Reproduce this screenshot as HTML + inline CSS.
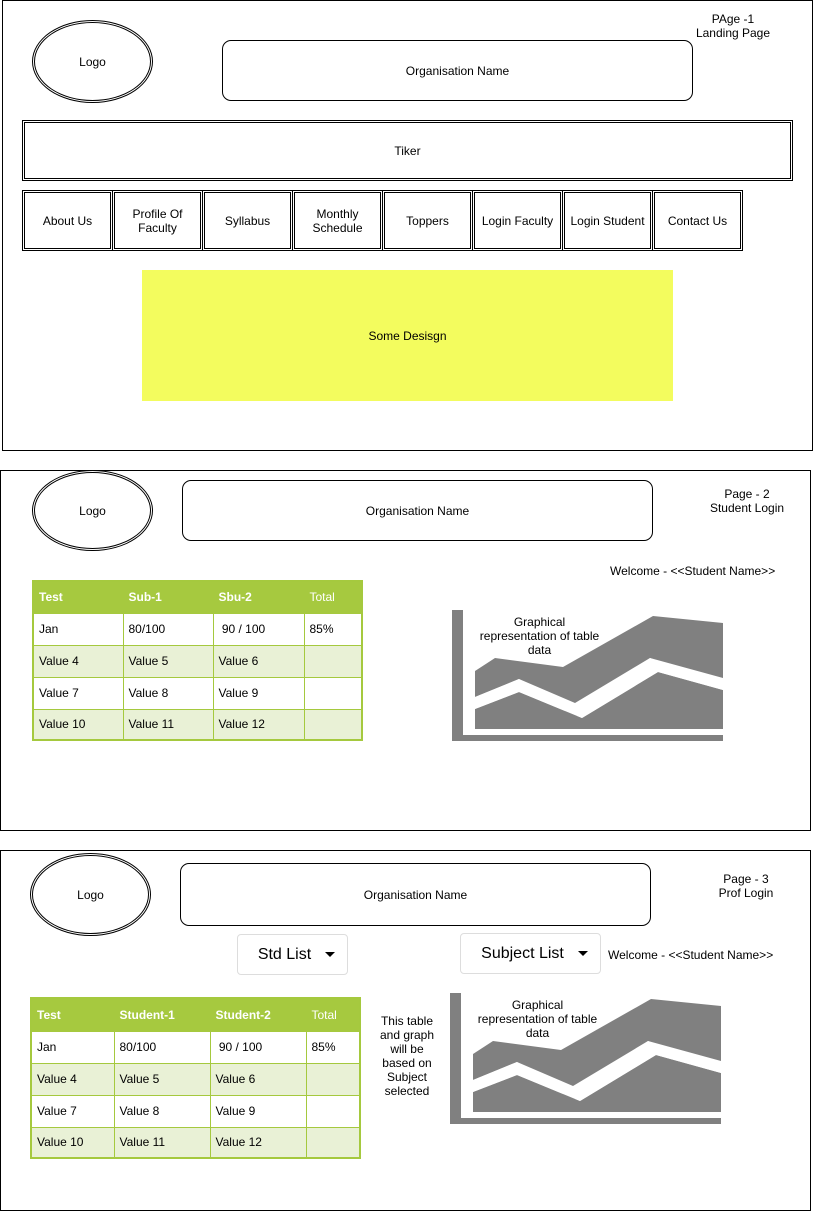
<!DOCTYPE html>
<html><head><meta charset="utf-8"><style>
*{box-sizing:border-box;margin:0;padding:0}
body{width:813px;height:1211px;background:#fff;position:relative;font-family:"Liberation Sans",Arial,sans-serif;font-size:12px;color:#000;overflow:hidden}
.a{position:absolute}
.c{display:flex;align-items:center;justify-content:center;text-align:center;line-height:14px}
.frame{border:1px solid #000}
.dbl{border:3px double #000}
.rnd{border:1px solid #000;border-radius:9px}
.ell{border:3px double #000;border-radius:50%}
table{border-collapse:collapse;position:absolute;font-size:12px}
td{border:1px solid #a5c93e;padding-left:5px;text-align:left}
tr.h td{background:#a6c93f;color:#fff;font-weight:bold;border-color:#a6c93f}
tr.h td.t{font-weight:normal}
tr.g td{background:#e9f1d6}
.dd{border:1px solid #ddd;border-radius:4px;font-size:16px}
.dd span.tri{display:inline-block;width:0;height:0;border-left:5px solid transparent;border-right:5px solid transparent;border-top:5px solid #000;margin-left:14px;vertical-align:middle}
</style></head><body>

<!-- Page 1 -->
<div class="a frame" style="left:2px;top:0;width:811px;height:451px"></div>
<div class="a ell c" style="left:32px;top:20px;width:121px;height:83px">Logo</div>
<div class="a rnd c" style="left:222px;top:40px;width:471px;height:61px">Organisation Name</div>
<div class="a c" style="left:683px;top:11px;width:100px;height:30px">PAge -1<br>Landing Page</div>
<div class="a dbl c" style="left:22px;top:120px;width:771px;height:61px">Tiker</div>
<div class="a dbl c" style="left:22px;top:190px;width:91px;height:61px">About Us</div>
<div class="a dbl c" style="left:112px;top:190px;width:91px;height:61px">Profile Of<br>Faculty</div>
<div class="a dbl c" style="left:202px;top:190px;width:91px;height:61px">Syllabus</div>
<div class="a dbl c" style="left:292px;top:190px;width:91px;height:61px">Monthly<br>Schedule</div>
<div class="a dbl c" style="left:382px;top:190px;width:91px;height:61px">Toppers</div>
<div class="a dbl c" style="left:472px;top:190px;width:91px;height:61px">Login Faculty</div>
<div class="a dbl c" style="left:562px;top:190px;width:91px;height:61px">Login Student</div>
<div class="a dbl c" style="left:652px;top:190px;width:91px;height:61px">Contact Us</div>
<div class="a c" style="left:142px;top:270px;width:531px;height:131px;background:#f3fc5e">Some Desisgn</div>

<!-- Page 2 -->
<div class="a frame" style="left:0;top:470px;width:811px;height:361px"></div>
<div class="a ell c" style="left:32px;top:470px;width:121px;height:81px">Logo</div>
<div class="a rnd c" style="left:182px;top:480px;width:471px;height:61px">Organisation Name</div>
<div class="a c" style="left:697px;top:486px;width:100px;height:30px">Page - 2<br>Student Login</div>
<div class="a" style="left:610px;top:564px">Welcome - &lt;&lt;Student Name&gt;&gt;</div>
<table style="left:32px;top:580px;width:331px;border:2px solid #a5c93e">
<colgroup><col style="width:90px"><col style="width:90px"><col style="width:91px"><col></colgroup>
<tr class="h" style="height:32px"><td>Test</td><td>Sub-1</td><td>Sbu-2</td><td class="t">Total</td></tr>
<tr style="height:32px"><td>Jan</td><td>80/100</td><td>&nbsp;90 / 100</td><td>85%</td></tr>
<tr class="g" style="height:32px"><td>Value 4</td><td>Value 5</td><td>Value 6</td><td></td></tr>
<tr style="height:32px"><td>Value 7</td><td>Value 8</td><td>Value 9</td><td></td></tr>
<tr class="g" style="height:31px"><td>Value 10</td><td>Value 11</td><td>Value 12</td><td></td></tr>
</table>
<svg class="a" style="left:0;top:0" width="813" height="1211">
<g fill="#808080">
<rect x="452" y="610" width="11" height="131"/><rect x="452" y="735" width="271" height="6"/>
<polygon points="475,671 495,658 563,667 653,616 723,623 723,688 650,658 575,718 519,679 475,697"/>
<polygon points="475,709 519,692 582,718 658,672 723,690 723,729 475,729"/>
<g transform="translate(-2,383)">
<rect x="452" y="610" width="11" height="131"/><rect x="452" y="735" width="271" height="6"/>
<polygon points="475,671 495,658 563,667 653,616 723,623 723,688 650,658 575,718 519,679 475,697"/>
<polygon points="475,709 519,692 582,718 658,672 723,690 723,729 475,729"/>
</g></g>
<g fill="#fff">
<polygon points="475,697 519,679 575,703 650,658 723,678 723,690 658,672 582,718 519,692 475,709"/>
<polygon transform="translate(-2,383)" points="475,697 519,679 575,703 650,658 723,678 723,690 658,672 582,718 519,692 475,709"/>
</g>
</svg>
<div class="a c" style="left:472px;top:615px;width:135px;height:42px">Graphical<br>representation of table<br>data</div>

<!-- Page 3 -->
<div class="a frame" style="left:0;top:850px;width:811px;height:361px"></div>
<div class="a ell c" style="left:30px;top:853px;width:121px;height:83px">Logo</div>
<div class="a rnd c" style="left:180px;top:863px;width:471px;height:63px">Organisation Name</div>
<div class="a c" style="left:696px;top:871px;width:100px;height:30px">Page - 3<br>Prof Login</div>
<div class="a dd c" style="left:237px;top:934px;width:111px;height:41px;padding-left:8px">Std List<span class="tri"></span></div>
<div class="a dd c" style="left:460px;top:933px;width:141px;height:41px;padding-left:8px">Subject List<span class="tri"></span></div>
<div class="a" style="left:608px;top:948px">Welcome - &lt;&lt;Student Name&gt;&gt;</div>
<table style="left:30px;top:997px;width:331px;border:2px solid #a5c93e">
<colgroup><col style="width:83px"><col style="width:96px"><col style="width:96px"><col></colgroup>
<tr class="h" style="height:33px"><td>Test</td><td>Student-1</td><td>Student-2</td><td class="t">Total</td></tr>
<tr style="height:32px"><td>Jan</td><td>80/100</td><td>&nbsp;90 / 100</td><td>85%</td></tr>
<tr class="g" style="height:32px"><td>Value 4</td><td>Value 5</td><td>Value 6</td><td></td></tr>
<tr style="height:32px"><td>Value 7</td><td>Value 8</td><td>Value 9</td><td></td></tr>
<tr class="g" style="height:31px"><td>Value 10</td><td>Value 11</td><td>Value 12</td><td></td></tr>
</table>
<div class="a c" style="left:372px;top:1013px;width:70px;height:86px">This table<br>and graph<br>will be<br>based on<br>Subject<br>selected</div>
<div class="a c" style="left:470px;top:998px;width:135px;height:42px">Graphical<br>representation of table<br>data</div>

</body></html>
